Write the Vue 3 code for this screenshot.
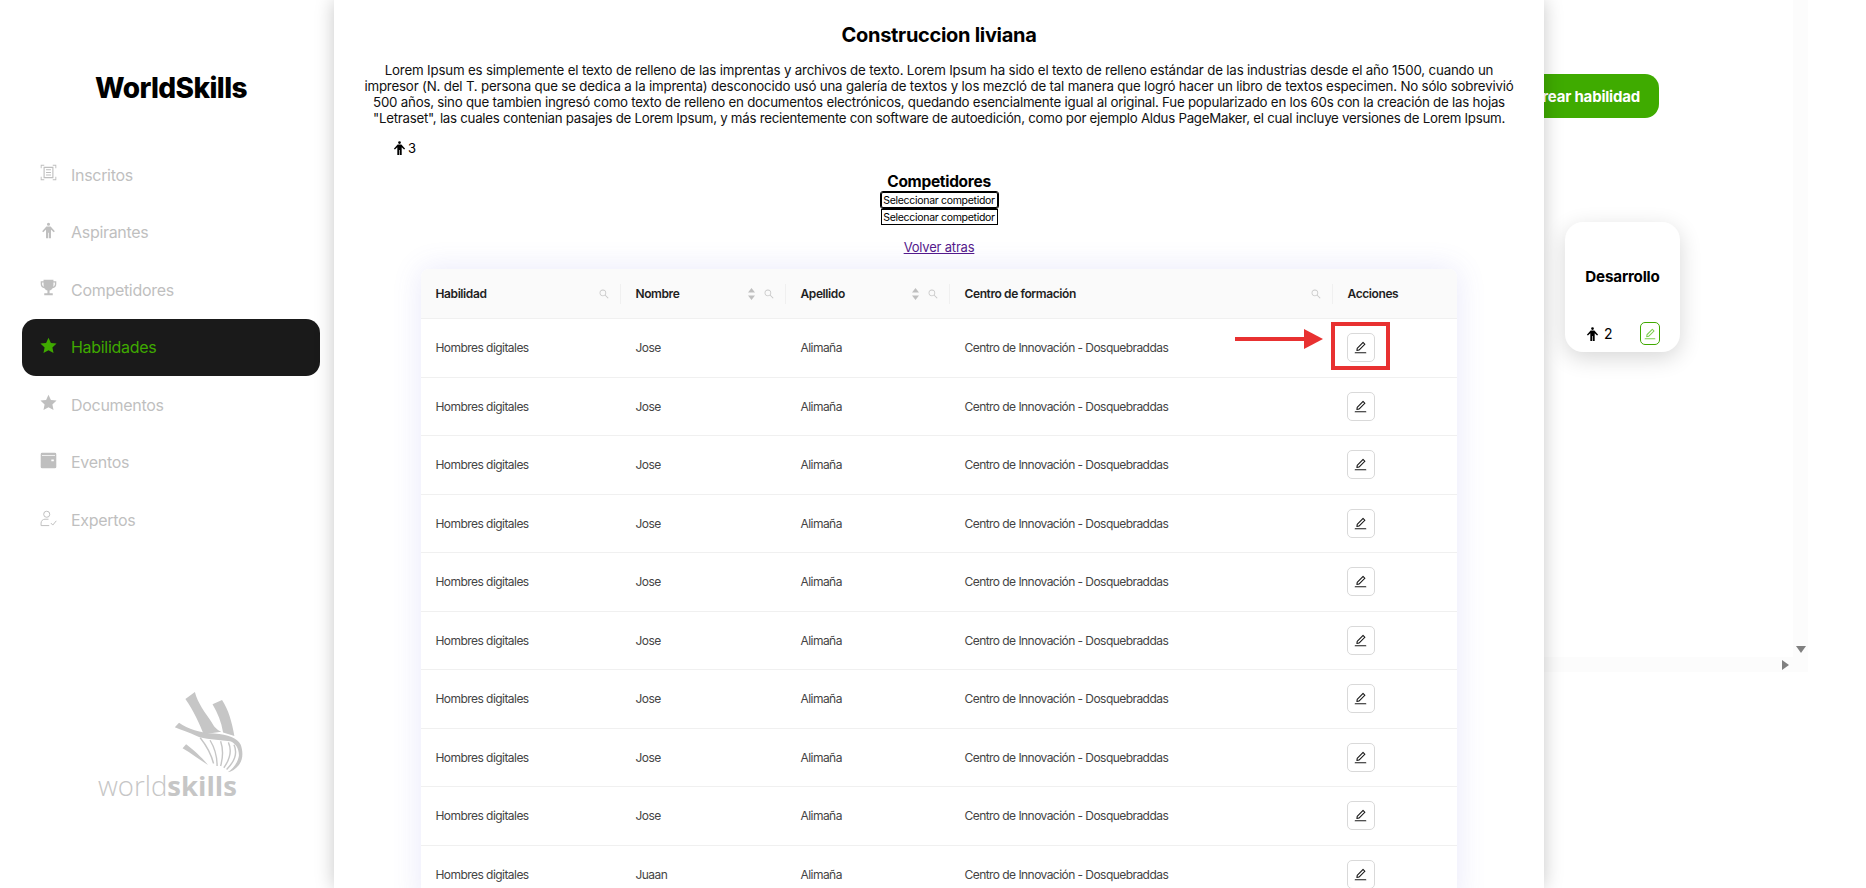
<script setup>
const nav = [
  { label: 'Inscritos', icon: 'scan' },
  { label: 'Aspirantes', icon: 'man' },
  { label: 'Competidores', icon: 'trophy' },
  { label: 'Habilidades', icon: 'star', active: true },
  { label: 'Documentos', icon: 'star' },
  { label: 'Eventos', icon: 'wallet' },
  { label: 'Expertos', icon: 'expert' }
]

const names = ['Jose', 'Jose', 'Jose', 'Jose', 'Jose', 'Jose', 'Jose', 'Jose', 'Jose', 'Juaan']

const editPath = 'M257.7 752c2 0 4-.2 6-.5L431.9 722c2-.4 3.9-1.3 5.3-2.8l423.9-423.9a9.96 9.96 0 0 0 0-14.1L694.9 114.9c-1.9-1.9-4.4-2.9-7.1-2.9s-5.2 1-7.1 2.9L256.8 538.8c-1.5 1.5-2.4 3.3-2.8 5.3l-29.5 168.2a33.5 33.5 0 0 0 9.4 29.8c6.6 6.4 14.9 9.9 23.8 9.9zm67.4-174.4L687.8 215l73.3 73.3-362.7 362.6-88.9 15.7 15.6-89zM880 836H144c-17.7 0-32 14.3-32 32v36c0 4.4 3.6 8 8 8h784c4.4 0 8-3.6 8-8v-36c0-17.7-14.3-32-32-32z'
const searchPath = 'M909.6 854.5L649.9 594.8C690.2 542.7 712 479 712 412c0-80.2-31.3-155.4-87.9-212.1-56.6-56.7-132-87.9-212.1-87.9s-155.5 31.3-212.1 87.9C143.2 256.5 112 331.8 112 412c0 80.1 31.3 155.5 87.9 212.1C256.5 680.8 331.8 712 412 712c67 0 130.6-21.8 182.7-62l259.7 259.6a8.2 8.2 0 0 0 11.6 0l43.6-43.5a8.2 8.2 0 0 0 0-11.6zM570.4 570.4C528 612.7 471.8 636 412 636s-116-23.3-158.4-65.6C211.3 528 188 471.8 188 412s23.3-116.1 65.6-158.4C296 211.3 352.2 188 412 188s116.1 23.2 158.4 65.6S636 352.2 636 412s-23.3 116.1-65.6 158.4z'
const manPath = 'M12 1a2.200 2.200 0 1 1 0 4.400a2.200 2.200 0 0 1 0-4.400zM9 6.200h6l6 7-1.700 1.300-3.800-3.800V23h-3v-8h-1v8h-3V10.700l-3.800 3.800L3 13.200z'
</script>

<template>
  <div class="app">
    <aside class="sidebar">
      <h1 class="brand">WorldSkills</h1>
      <nav class="menu">
        <a v-for="item in nav" :key="item.label" class="menu-item" :class="{ active: item.active }">
          <svg class="menu-icon" viewBox="0 0 24 24" fill="currentColor">
            <template v-if="item.icon === 'scan'">
              <path d="M1 6V1h5v1.300H2.300V6zM18 1h5v5h-1.300V2.300H18zM1 18h1.300v3.700H6V23H1zM21.700 18H23v5h-5v-1.300h3.700z" />
              <path fill-rule="evenodd" d="M5 4h14v16H5zm1.600 1.600v12.800h10.800V5.600zM8.500 7.500h7v1.400h-7zm0 3.700h7v1.400h-7zm0 3.700h7v1.400h-7z" />
            </template>
            <path v-else-if="item.icon === 'man'" :d="manPath" />
            <path v-else-if="item.icon === 'trophy'" d="M5 1h14v2h4v4.500c0 3-2.200 5.200-5.200 5.500-1 1.600-2.500 2.800-4.300 3.200V20H18v3H6v-3h4.500v-3.800c-1.800-.4-3.300-1.600-4.300-3.200C3.200 12.700 1 10.500 1 7.500V3h4zM3 5v2.500c0 1.600 1 2.900 2.500 3.300C5.200 10 5 9 5 8V5zm16 0v3c0 1-.2 2-.5 2.800 1.500-.4 2.500-1.700 2.500-3.300V5z" />
            <path v-else-if="item.icon === 'star'" d="M12 1l3.400 7.400 8 .9-5.900 5.500 1.600 7.900L12 18.800l-7.100 3.900 1.600-7.900L.6 9.300l8-.9z" />
            <path v-else-if="item.icon === 'wallet'" fill-rule="evenodd" d="M3 1h18a2 2 0 0 1 2 2v18a2 2 0 0 1-2 2H3a2 2 0 0 1-2-2V3a2 2 0 0 1 2-2zm-.2 3.200v1.200h18.400V4.200zM16 10.500v2.500h3.500v-2.500z" />
            <g v-else fill="none" stroke="currentColor" stroke-width="1.400">
              <circle cx="9.500" cy="6" r="4.300" />
              <path d="M1.500 22v-3.500c0-3.200 2.600-5.500 5.500-5.500h5M1.500 22H13M15.500 18.500l2.500 2.800 5-6" />
            </g>
          </svg>
          <span>{{ item.label }}</span>
        </a>
      </nav>
      <div class="logo">
        <svg class="logo-mark" viewBox="350 60 210 240" fill="#c6c6c6">
          <path d="M388 85L415 65C422 95 445 125 462 150C470 165 478 172 490 178L440 185C430 160 410 115 388 85z" />
          <path d="M465 100L492 88C510 115 520 150 527 190L495 180C490 150 480 125 465 100z" />
          <path d="M358 165L370 152C395 170 430 180 470 183C510 186 535 195 545 215C552 235 552 255 540 272C530 284 520 290 508 293C525 282 538 262 540 245C540 225 530 210 515 205C480 200 440 200 420 190C400 180 375 172 358 165z" />
          <path d="M380 225L390 213C410 228 435 250 452 272C430 258 405 240 380 225z" />
          <g fill="none" stroke="#c6c6c6" stroke-width="4">
            <path d="M430 195C450 220 462 245 468 268" />
            <path d="M458 202C472 225 478 250 478 275" />
            <path d="M488 205C495 225 495 250 488 275" />
            <path d="M510 208C520 230 515 255 497 280" />
            <path d="M526 215C535 235 530 260 505 285" />
          </g>
        </svg>
        <div class="logo-text"><span class="thin">world</span><b>skills</b></div>
      </div>
    </aside>

    <main class="content">
      <div class="stage">
        <div class="workspace">
          <div class="toolbar">
            <button class="create-btn">Crear habilidad</button>
          </div>
          <div class="cards">
            <article class="card">
              <h3 class="card-title">Desarrollo</h3>
              <div class="card-foot">
                <span class="card-count">
                  <svg viewBox="0 0 24 24" fill="#000"><path :d="manPath" /></svg>
                  2
                </span>
                <span class="card-edit">
                  <svg viewBox="64 64 896 896" fill="#7ccf4e"><path :d="editPath" /></svg>
                </span>
              </div>
            </article>
          </div>
        </div>
        <div class="scroll-v"><i class="arrow-down"></i></div>
      </div>
      <div class="scroll-h"><i class="arrow-right"></i></div>

      <section class="modal">
        <h2 class="modal-title">Construccion liviana</h2>
        <p class="modal-text">
          <span>Lorem Ipsum es simplemente el texto de relleno de las imprentas y archivos de texto. Lorem Ipsum ha sido el texto de relleno estándar de las industrias desde el año 1500, cuando un</span>
          <span>impresor (N. del T. persona que se dedica a la imprenta) desconocido usó una galería de textos y los mezcló de tal manera que logró hacer un libro de textos especimen. No sólo sobrevivió</span>
          <span class="tight">500 años, sino que tambien ingresó como texto de relleno en documentos electrónicos, quedando esencialmente igual al original. Fue popularizado en los 60s con la creación de las hojas</span>
          <span class="tighter">"Letraset", las cuales contenian pasajes de Lorem Ipsum, y más recientemente con software de autoedición, como por ejemplo Aldus PageMaker, el cual incluye versiones de Lorem Ipsum.</span>
        </p>
        <div class="modal-count">
          <svg viewBox="0 0 24 24" fill="#000"><path :d="manPath" /></svg>
          <span>3</span>
        </div>
        <div class="pick">
          <h4 class="pick-title">Competidores</h4>
          <button class="pick-btn focused">Seleccionar competidor</button>
          <button class="pick-btn">Seleccionar competidor</button>
          <a class="back" href="#">Volver atras</a>
        </div>

        <div class="table">
          <div class="row head">
            <div class="cell th">
              <span>Habilidad</span>
              <svg class="search" viewBox="64 64 896 896"><path :d="searchPath" /></svg>
            </div>
            <div class="cell th">
              <span>Nombre</span>
              <svg class="sort" viewBox="0 0 7 12"><path d="M3.500 0L7 4.500H0zM0 7.500h7L3.500 12z" /></svg>
              <svg class="search" viewBox="64 64 896 896"><path :d="searchPath" /></svg>
            </div>
            <div class="cell th">
              <span>Apellido</span>
              <svg class="sort" viewBox="0 0 7 12"><path d="M3.500 0L7 4.500H0zM0 7.500h7L3.500 12z" /></svg>
              <svg class="search" viewBox="64 64 896 896"><path :d="searchPath" /></svg>
            </div>
            <div class="cell th">
              <span>Centro de formación</span>
              <svg class="search" viewBox="64 64 896 896"><path :d="searchPath" /></svg>
            </div>
            <div class="cell th"><span>Acciones</span></div>
          </div>
          <div v-for="(name, i) in names" :key="i" class="row">
            <div class="cell">Hombres digitales</div>
            <div class="cell">{{ name }}</div>
            <div class="cell">Alimaña</div>
            <div class="cell">Centro de Innovación - Dosquebraddas</div>
            <div class="cell action">
              <button class="edit-btn">
                <svg viewBox="64 64 896 896" fill="#1a1a1a"><path :d="editPath" /></svg>
              </button>
            </div>
          </div>
          <div class="callout">
            <span class="callout-line"></span>
            <span class="callout-head"></span>
          </div>
          <div class="callout-box"></div>
        </div>
      </section>
    </main>
  </div>
</template>

<style>
html, body {
  margin: 0;
  background: #fff;
  overflow: hidden;
}
</style>

<style scoped>
.app {
  display: flex;
  width: 1866px;
  height: 888px;
  overflow: hidden;
  font-family: Inter, "Liberation Sans", sans-serif;
  color: #000;
  background: #fff;
}

.sidebar {
  width: 334px;
  flex: none;
  display: flex;
  flex-direction: column;
  padding: 0 14px 0 22px;
  box-sizing: border-box;
}

.brand {
  margin: 71px 0 0;
  height: 34px;
  line-height: 34px;
  text-align: center;
  font-size: 28px;
  font-weight: 800;
  letter-spacing: -0.6px;
}

.menu {
  margin-top: 41px;
  display: flex;
  flex-direction: column;
  gap: 0.6px;
}

.menu-item {
  display: flex;
  align-items: center;
  gap: 14px;
  height: 57px;
  padding-left: 18px;
  border-radius: 14px;
  font-size: 16px;
  color: #bfbfbf;
  letter-spacing: -0.3px;
}

.menu-item.active {
  background: #1a1a1a;
  color: #3fa900;
}

.menu-icon {
  width: 17px;
  height: 17px;
  margin-top: -4px;
  flex: none;
}

.logo {
  margin-top: 141px;
  margin-left: 76px;
  width: 145px;
}

.logo-mark {
  display: block;
  width: 74px;
  height: 85px;
  margin-left: 74px;
}

.logo-text {
  margin-top: -3px;
  font-size: 27.5px;
  line-height: 27px;
  color: #c6c6c6;
  white-space: nowrap;
  font-family: "Open Sans", sans-serif;
}

.logo-text .thin {
  font-weight: 300;
}

.logo-text b {
  font-weight: 700;
}

.content {
  position: relative;
  flex: 1;
  min-width: 0;
}

.stage {
  display: flex;
  height: 657px;
  width: 1474px;
}

.workspace {
  flex: 1;
  min-width: 0;
}

.toolbar {
  display: flex;
  justify-content: flex-end;
  padding: 74px 134px 0 0;
}

.create-btn {
  height: 44px;
  padding: 0 19px 0 60px;
  border: none;
  border-radius: 14px;
  background: #3fab00;
  color: #fff;
  font: 700 15px Inter, sans-serif;
  letter-spacing: -0.2px;
  white-space: nowrap;
}

.cards {
  padding: 104px 0 0 1231px;
}

.card {
  width: 115px;
  height: 130px;
  box-sizing: border-box;
  border-radius: 18px;
  background: #fff;
  box-shadow: 0 6px 22px rgba(0, 0, 0, 0.16);
  padding: 0 20px 7px 23px;
  display: flex;
  flex-direction: column;
}

.card-title {
  flex: 1;
  display: flex;
  align-items: center;
  justify-content: center;
  margin: 0 -10px 0 -13px;
  padding-top: 8px;
  font-size: 15.2px;
  font-weight: 700;
  letter-spacing: -0.2px;
}

.card-foot {
  display: flex;
  justify-content: space-between;
  align-items: center;
}

.card-count {
  display: flex;
  align-items: center;
  gap: 4px;
  font-size: 14px;
}

.card-count svg {
  width: 15px;
  height: 16px;
  margin-left: -3px;
}

.card-edit {
  width: 20px;
  height: 23px;
  box-sizing: border-box;
  display: flex;
  align-items: center;
  justify-content: center;
  border: 1px solid #3fa900;
  border-radius: 5px;
}

.card-edit svg {
  width: 12px;
  height: 12px;
}

.scroll-v {
  width: 15px;
  background: #fcfcfc;
  display: flex;
  justify-content: center;
  align-items: flex-end;
}

.arrow-down {
  border: 5px solid transparent;
  border-top: 7px solid #808080;
  border-bottom: 0;
  margin-bottom: 4px;
}

.scroll-h {
  width: 1474px;
  height: 15px;
  background: #fcfcfc;
  display: flex;
  align-items: center;
  justify-content: flex-end;
  padding-right: 19px;
  box-sizing: border-box;
}

.arrow-right {
  border: 5px solid transparent;
  border-left: 7px solid #808080;
  border-right: 0;
}

.modal {
  position: absolute;
  left: 0;
  top: 0;
  width: 1210px;
  height: 888px;
  overflow: hidden;
  background: #fff;
  box-shadow: 0 0 18px rgba(0, 0, 0, 0.22);
  clip-path: inset(0 -40px 0 -40px);
  display: flex;
  flex-direction: column;
  align-items: center;
}

.modal-title {
  margin: 23px 0 0;
  height: 24px;
  line-height: 24px;
  font-size: 20px;
  font-weight: 700;
  letter-spacing: -0.3px;
}

.modal-text {
  margin: 15px 0 0;
  width: 1170px;
  font-size: 13.3px;
  line-height: 16px;
  text-align: center;
  white-space: nowrap;
  color: #111;
  letter-spacing: -0.18px;
}

.modal-text span {
  display: block;
}

.modal-text .tight {
  letter-spacing: -0.23px;
}

.modal-text .tighter {
  letter-spacing: -0.27px;
}

.modal-count {
  align-self: flex-start;
  display: flex;
  align-items: center;
  gap: 1px;
  margin: 14px 0 0 58px;
  height: 20px;
  font-size: 13px;
}

.modal-count svg {
  width: 15px;
  height: 16px;
}

.pick {
  margin-top: 15px;
  display: flex;
  flex-direction: column;
  align-items: center;
}

.pick-title {
  margin: 0;
  height: 21px;
  line-height: 21px;
  font-size: 15.5px;
  font-weight: 700;
  letter-spacing: -0.3px;
}

.pick-btn {
  width: 117px;
  height: 16px;
  margin-bottom: 1px;
  padding: 0;
  box-sizing: border-box;
  background: #fff;
  border: 1px solid #000;
  font: 400 10.5px Inter, sans-serif;
  letter-spacing: -0.3px;
  color: #000;
  white-space: nowrap;
}

.pick-btn.focused {
  outline: 1px solid #000;
  border-radius: 2px;
}

.back {
  margin-top: 13px;
  font-size: 13px;
  line-height: 17px;
  color: #551a8b;
  letter-spacing: -0.2px;
}

.table {
  position: relative;
  margin: 13px 0 0 -1px;
  width: 1036px;
  flex: none;
  background: #fff;
  border-radius: 8px 8px 0 0;
  box-shadow: 0 0 30px rgba(90, 90, 220, 0.14);
}

.row {
  display: grid;
  grid-template-columns: 200px 165px 164px 383px 124px;
  height: 58.5px;
  box-sizing: border-box;
  border-bottom: 1px solid #f0f0f0;
}

.row.head {
  height: 50px;
  background: #fafafa;
  border-radius: 8px 8px 0 0;
}

.cell {
  display: flex;
  align-items: center;
  padding: 0 15px;
  font-size: 12px;
  letter-spacing: -0.55px;
  color: #444;
  white-space: nowrap;
}

.cell.action {
  padding-left: 14px;
}

.th {
  position: relative;
  font-weight: 600;
  color: #1f1f1f;
  letter-spacing: -0.4px;
}

.th span {
  flex: 1;
}

.th:not(:last-child)::after {
  content: "";
  position: absolute;
  right: 0;
  top: 15px;
  height: 20px;
  width: 1px;
  background: #f0f0f0;
}

.search {
  width: 10px;
  height: 10px;
  fill: #c8c8c8;
  margin-right: -3px;
}

.sort {
  width: 7px;
  height: 12px;
  margin-right: 9px;
  fill: #bfbfbf;
}

.edit-btn {
  width: 28px;
  height: 29px;
  padding: 0;
  display: flex;
  align-items: center;
  justify-content: center;
  background: #fff;
  border: 1px solid #d9d9d9;
  border-radius: 5px;
}

.edit-btn svg {
  width: 13px;
  height: 13px;
}

.callout {
  position: absolute;
  left: 814px;
  top: 60px;
  width: 88px;
  height: 20px;
}

.callout-line {
  position: absolute;
  left: 0;
  top: 8px;
  width: 70px;
  height: 4px;
  background: #e83131;
}

.callout-head {
  position: absolute;
  right: 0;
  top: 0;
  border-left: 19px solid #e83131;
  border-top: 10px solid transparent;
  border-bottom: 10px solid transparent;
}

.callout-box {
  position: absolute;
  left: 910px;
  top: 53px;
  width: 59px;
  height: 48px;
  box-sizing: border-box;
  border: 4px solid #e83131;
}
</style>
